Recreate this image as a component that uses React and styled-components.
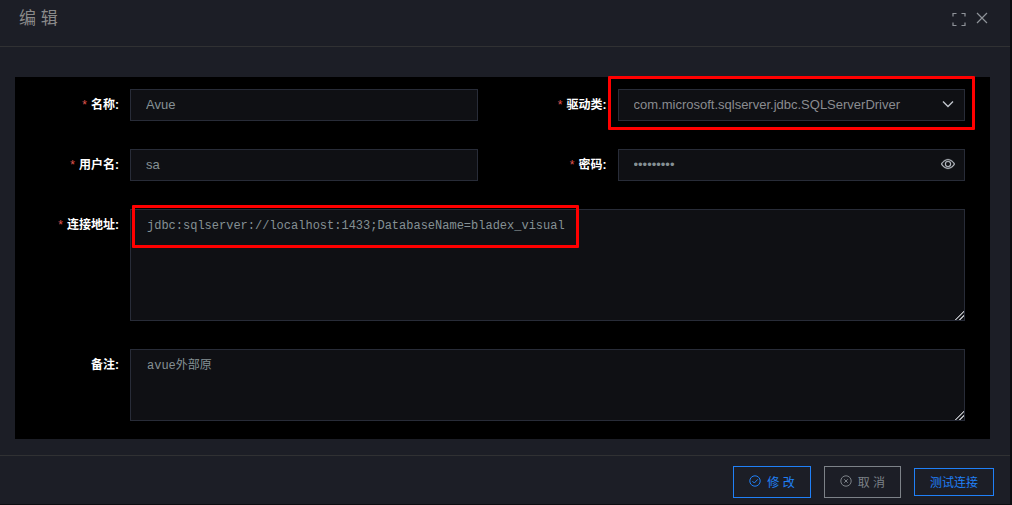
import { useState } from "react";
import styled, { createGlobalStyle, css } from "styled-components";

const GlobalStyle = createGlobalStyle`
    * {
        box-sizing: border-box;
    }
    body {
        margin: 0;
        background-color: #0c0d11;
        color: #ffffff;
        font-family: "Liberation Sans", "Noto Sans CJK SC", sans-serif;
        font-size: 12px;
    }
    button, input, select {
        font-family: inherit;
    }
`;

const Dialog = styled.div`
    display: flex;
    flex-direction: column;
    min-height: calc(100vh - 1px);
    margin-right: 2px;
    background-color: #1c1e26;
`;

const Header = styled.header`
    display: flex;
    justify-content: space-between;
    align-items: center;
    height: 47px;
    padding: 0 20px 8px 19px;
    border-bottom: 1px solid #303133;
`;

const Title = styled.h1`
    margin: 0;
    color: #8a8a8a;
    font-size: 17px;
    font-weight: 400;
    line-height: 20px;
`;

const HeaderActions = styled.div`
    display: flex;
    align-items: center;
    gap: 8px;
`;

const IconButton = styled.button`
    display: flex;
    padding: 0;
    border: none;
    background: none;
    color: #8f9399;
    cursor: pointer;
`;

const Main = styled.main`
    flex: 1 0 auto;
    padding: 30px 20px 16px 15px;
`;

const Form = styled.form`
    display: grid;
    grid-template-columns: 1fr 1fr;
    row-gap: 28px;
    padding: 12px 0 18px;
    background-color: #000000;
`;

const Field = styled.div`
    display: flex;
    padding-right: 25px;
    grid-column: ${({ $wide }) => ($wide ? "1 / -1" : "auto")};
`;

const Label = styled.label`
    flex: 0 0 115px;
    padding-right: 11px;
    color: #ffffff;
    font-size: 12px;
    font-weight: 700;
    line-height: 32px;
    text-align: right;

    ${({ $required }) =>
        $required &&
        css`
            &::before {
                content: "*";
                margin-right: 4px;
                color: #e0564f;
                font-weight: 400;
            }
        `}
`;

const Control = styled.div`
    position: relative;
    display: flex;
    flex: 1;
    min-width: 0;
`;

const controlStyle = css`
    width: 100%;
    margin: 0;
    border: 1px solid #282c38;
    border-radius: 0;
    outline: none;
    background-color: #0f1014;
    color: #859094;
`;

const Input = styled.input`
    ${controlStyle}
    height: 32px;
    padding: 0 15px 2px;
    font-size: 13px;
`;

const Select = styled.select`
    ${controlStyle}
    appearance: none;
    height: 32px;
    padding: 0 30px 2px 15px;
    color: #8a8c90;
    font-size: 13px;
`;

const TextArea = styled.textarea`
    ${controlStyle}
    height: ${({ $height }) => $height}px;
    padding: 7px 16px;
    font-family: "Liberation Mono", "Noto Sans CJK SC", monospace;
    font-size: 12px;
    line-height: 18px;
    resize: vertical;

    &::-webkit-resizer {
        background: linear-gradient(
            135deg,
            transparent 67%,
            #b4b6ba 68%,
            #b4b6ba 73%,
            transparent 74%,
            transparent 81%,
            #b4b6ba 82%,
            #b4b6ba 87%,
            transparent 88%
        );
    }
`;

const Suffix = styled.span`
    position: absolute;
    top: 0;
    right: 10px;
    display: flex;
    align-items: center;
    height: 30px;
    color: #c0c4cc;
    pointer-events: ${({ $clickable }) => ($clickable ? "auto" : "none")};

    ${IconButton} {
        color: inherit;
    }
`;

const Highlight = styled.span`
    position: absolute;
    top: ${({ $top }) => $top}px;
    left: ${({ $left }) => $left}px;
    right: ${({ $right }) => $right};
    width: ${({ $width }) => $width};
    height: ${({ $height }) => $height}px;
    border: 3px solid #ff0000;
    border-radius: 1px;
    pointer-events: none;
`;

const Footer = styled.footer`
    display: flex;
    justify-content: flex-end;
    align-items: center;
    gap: 13px;
    padding: 10px 16px 6px;
    border-top: 1px solid #303133;
`;

const Button = styled.button`
    display: flex;
    align-items: center;
    gap: 6px;
    height: ${({ $small }) => ($small ? 28 : 32)}px;
    padding: 0 15px 2px;
    border: 1px solid currentColor;
    background: none;
    color: ${({ $primary }) => ($primary ? "#2080f7" : "#7d8288")};
    font-size: 12px;
    cursor: pointer;
`;

function FullScreenIcon() {
    return (
        <svg width="14" height="14" viewBox="0 0 14 14" fill="none" stroke="currentColor">
            <path d="M4.500 1.500H1v3M9.500 1.500H13v3M13 10.500V13.500H9.500M4.500 13.500H1V10.500" strokeWidth="1.200" />
        </svg>
    );
}

function CloseIcon() {
    return (
        <svg width="16" height="16" viewBox="0 0 16 16" fill="none" stroke="currentColor">
            <path d="M3 2l10 10M13 2L3 12" strokeWidth="1.200" />
        </svg>
    );
}

function ArrowIcon() {
    return (
        <svg width="14" height="14" viewBox="0 0 14 14" fill="none" stroke="currentColor">
            <path d="M2 4.500l5 5 5-5" strokeWidth="1.400" />
        </svg>
    );
}

function ViewIcon() {
    return (
        <svg width="14" height="14" viewBox="0 0 1024 1024" fill="currentColor" stroke="currentColor" strokeWidth="24">
            <path d="M512 160c320 0 512 352 512 352S832 864 512 864 0 512 0 512s192-352 512-352zm0 64c-225.280 0-384.128 208.064-436.800 288 52.608 79.872 211.456 288 436.800 288 225.280 0 384.128-208.064 436.800-288-52.608-79.872-211.456-288-436.800-288zm0 64a224 224 0 1 1 0 448 224 224 0 0 1 0-448zm0 64a160.192 160.192 0 0 0-160 160c0 88.192 71.744 160 160 160s160-71.808 160-160-71.744-160-160-160z" />
        </svg>
    );
}

function CircleCheckIcon() {
    return (
        <svg width="12" height="12" viewBox="0 0 12 12" fill="none" stroke="currentColor">
            <circle cx="6" cy="6" r="5.200" />
            <path d="M3.400 6.100l1.900 1.900 3.500-3.700" />
        </svg>
    );
}

function CircleCloseIcon() {
    return (
        <svg width="12" height="12" viewBox="0 0 12 12" fill="none" stroke="currentColor">
            <circle cx="6" cy="6" r="5.200" />
            <path d="M4.300 4.300l3.400 3.400M7.700 4.300L4.300 7.700" />
        </svg>
    );
}

export default function App() {
    const [form, setForm] = useState({
        name: "Avue",
        driver: "com.microsoft.sqlserver.jdbc.SQLServerDriver",
        username: "sa",
        password: "sa1234567",
        url: "jdbc:sqlserver://localhost:1433;DatabaseName=bladex_visual",
        remark: "avue外部原",
    });
    const [showPassword, setShowPassword] = useState(false);

    const bind = (field) => ({
        id: field,
        value: form[field],
        onChange: ({ target }) => setForm({ ...form, [field]: target.value }),
    });

    return (
        <>
            <GlobalStyle />
            <Dialog>
                <Header>
                    <Title>编 辑</Title>
                    <HeaderActions>
                        <IconButton type="button" aria-label="全屏">
                            <FullScreenIcon />
                        </IconButton>
                        <IconButton type="button" aria-label="关闭">
                            <CloseIcon />
                        </IconButton>
                    </HeaderActions>
                </Header>
                <Main>
                    <Form id="dataSource" onSubmit={(e) => e.preventDefault()}>
                        <Field>
                            <Label htmlFor="name" $required>名称:</Label>
                            <Control>
                                <Input {...bind("name")} />
                            </Control>
                        </Field>
                        <Field>
                            <Label htmlFor="driver" $required>驱动类:</Label>
                            <Control>
                                <Select {...bind("driver")}>
                                    <option>com.microsoft.sqlserver.jdbc.SQLServerDriver</option>
                                </Select>
                                <Suffix>
                                    <ArrowIcon />
                                </Suffix>
                                <Highlight $top={-13} $left={-10} $right="-10px" $height={54} />
                            </Control>
                        </Field>
                        <Field>
                            <Label htmlFor="username" $required>用户名:</Label>
                            <Control>
                                <Input {...bind("username")} />
                            </Control>
                        </Field>
                        <Field>
                            <Label htmlFor="password" $required>密码:</Label>
                            <Control>
                                <Input
                                    {...bind("password")}
                                    type={showPassword ? "text" : "password"}
                                />
                                <Suffix $clickable>
                                    <IconButton
                                        type="button"
                                        aria-label="显示密码"
                                        onClick={() => setShowPassword(!showPassword)}
                                    >
                                        <ViewIcon />
                                    </IconButton>
                                </Suffix>
                            </Control>
                        </Field>
                        <Field $wide>
                            <Label htmlFor="url" $required>连接地址:</Label>
                            <Control>
                                <TextArea {...bind("url")} $height={112} spellCheck={false} />
                                <Highlight $top={-4} $left={2} $width="447px" $height={43} />
                            </Control>
                        </Field>
                        <Field $wide>
                            <Label htmlFor="remark">备注:</Label>
                            <Control>
                                <TextArea {...bind("remark")} $height={72} spellCheck={false} />
                            </Control>
                        </Field>
                    </Form>
                </Main>
                <Footer>
                    <Button type="submit" form="dataSource" $primary>
                        <CircleCheckIcon />
                        修 改
                    </Button>
                    <Button type="button">
                        <CircleCloseIcon />
                        取 消
                    </Button>
                    <Button type="button" $primary $small>
                        测试连接
                    </Button>
                </Footer>
            </Dialog>
        </>
    );
}
